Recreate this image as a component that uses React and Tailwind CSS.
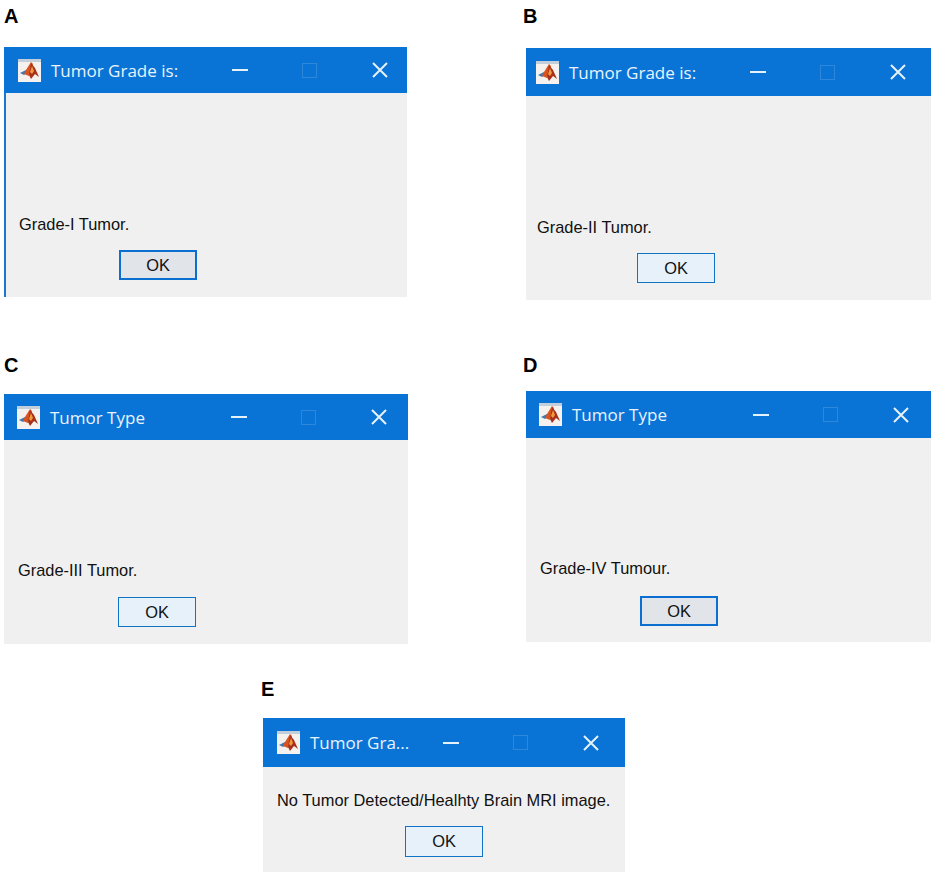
const MatlabIcon = () => (
  <svg width="23" height="23" viewBox="0 0 23 23" className="shrink-0">
    <rect width="23" height="23" fill="#f4f1ee" />
    <rect width="23" height="3" fill="#c3cedb" />
    <path d="M2 14 L8 11 L10 13 L6 16 Z" fill="#3f78b5" />
    <path d="M8 11 L13 3 L15 5 L11 17 L6 15 Z" fill="#d9531e" />
    <path d="M13 4 L17 9 L21 18 L17 15 L13 20 L11 16 Z" fill="#a8301a" />
    <path d="M14 7 L16 12 L14 15 L12 13 Z" fill="#f09a3e" />
  </svg>
);

function Dialog({ title, message, focused, leftEdge, barClass, titleClass = "w-[181px]", bodyClass, messageClass, buttonClass }) {
  return (
    <div className="w-full flex flex-col bg-[#f0f0f0]">
      <div className={`shrink-0 flex items-center bg-[#0a74d6] ${barClass}`}>
        <MatlabIcon />
        <span className={`ml-[10px] shrink-0 text-[17px] leading-none whitespace-nowrap text-[#e8f3fc] font-['Open_Sans',sans-serif] ${titleClass}`}>
          {title}
        </span>
        <span className="shrink-0 w-[16px] h-[2px] bg-[#e6f2fb]" />
        <span className="shrink-0 ml-[54px] w-[15px] h-[15px] border border-[#2f87da]" />
        <svg width="18" height="18" viewBox="0 0 18 18" className="shrink-0 ml-[54px]">
          <path d="M2 2 L16 16 M16 2 L2 16" stroke="#e6f2fb" strokeWidth="2" />
        </svg>
      </div>
      <div className={`flex flex-col ${leftEdge ? "border-l-2 border-[#1b78d0]" : ""} ${bodyClass}`}>
        <p className={`text-[16.4px] leading-[20px] text-[#111111] whitespace-nowrap font-['Liberation_Sans',sans-serif] ${messageClass}`}>
          {message}
        </p>
        <button
          className={`w-[78px] text-[16.4px] text-[#111111] font-['Liberation_Sans',sans-serif] ${
            focused ? "border-2 border-[#0a6fd0] bg-[#e1e4e8]" : "border border-[#0f74c8] bg-[#e6f1fa]"
          } ${buttonClass}`}
        >
          OK
        </button>
      </div>
    </div>
  );
}

const Label = ({ children, className = "" }) => (
  <div className={`h-[20px] text-[20px] leading-[20px] font-bold text-black font-['Liberation_Sans',sans-serif] ${className}`}>
    {children}
  </div>
);

export default function App() {
  return (
    <div className="w-[935px] h-[886px] bg-white overflow-hidden pl-[4px] pt-[6px]">
      <div className="flex">
        <div className="w-[403px]">
          <Label>A</Label>
          <div className="mt-[21px]">
            <Dialog
              title="Tumor Grade is:"
              message="Grade-I Tumor."
              focused
              leftEdge
              barClass="h-[46px] pl-[14px]"
              bodyClass="pt-[121px] pb-[17px]"
              messageClass="ml-[13px]"
              buttonClass="h-[30px] mt-[16px] ml-[113px]"
            />
          </div>
        </div>
        <div className="w-[405px] ml-[119px]">
          <Label className="-ml-[3px]">B</Label>
          <div className="mt-[22px]">
            <Dialog
              title="Tumor Grade is:"
              message="Grade-II Tumor."
              barClass="h-[48px] pl-[10px]"
              bodyClass="pt-[121px] pb-[17px]"
              messageClass="ml-[11px]"
              buttonClass="h-[30px] mt-[16px] ml-[111px]"
            />
          </div>
        </div>
      </div>
      <div className="flex mt-[55px]">
        <div className="w-[404px]">
          <Label>C</Label>
          <div className="mt-[19px]">
            <Dialog
              title="Tumor Type"
              message="Grade-III Tumor."
              barClass="h-[46px] pl-[13px]"
              bodyClass="pt-[120px] pb-[17px]"
              messageClass="ml-[14px]"
              buttonClass="h-[30px] mt-[17px] ml-[114px]"
            />
          </div>
        </div>
        <div className="w-[405px] ml-[118px]">
          <Label className="-ml-[3px]">D</Label>
          <div className="mt-[16px]">
            <Dialog
              title="Tumor Type"
              message="Grade-IV Tumour."
              focused
              barClass="h-[47px] pl-[13px]"
              bodyClass="pt-[120px] pb-[16px]"
              messageClass="ml-[14px]"
              buttonClass="h-[30px] mt-[18px] ml-[114px]"
            />
          </div>
        </div>
      </div>
      <div className="w-[362px] ml-[259px] mt-[35px]">
        <Label className="-ml-[2px]">E</Label>
        <div className="mt-[19px]">
          <Dialog
            title="Tumor Gra..."
            message="No Tumor Detected/Healhty Brain MRI image."
            barClass="h-[49px] pl-[14px]"
            titleClass="w-[133px]"
            bodyClass="pt-[23px] pb-[15px]"
            messageClass="ml-[14px]"
            buttonClass="h-[31px] mt-[16px] ml-[142px]"
          />
        </div>
      </div>
    </div>
  );
}
